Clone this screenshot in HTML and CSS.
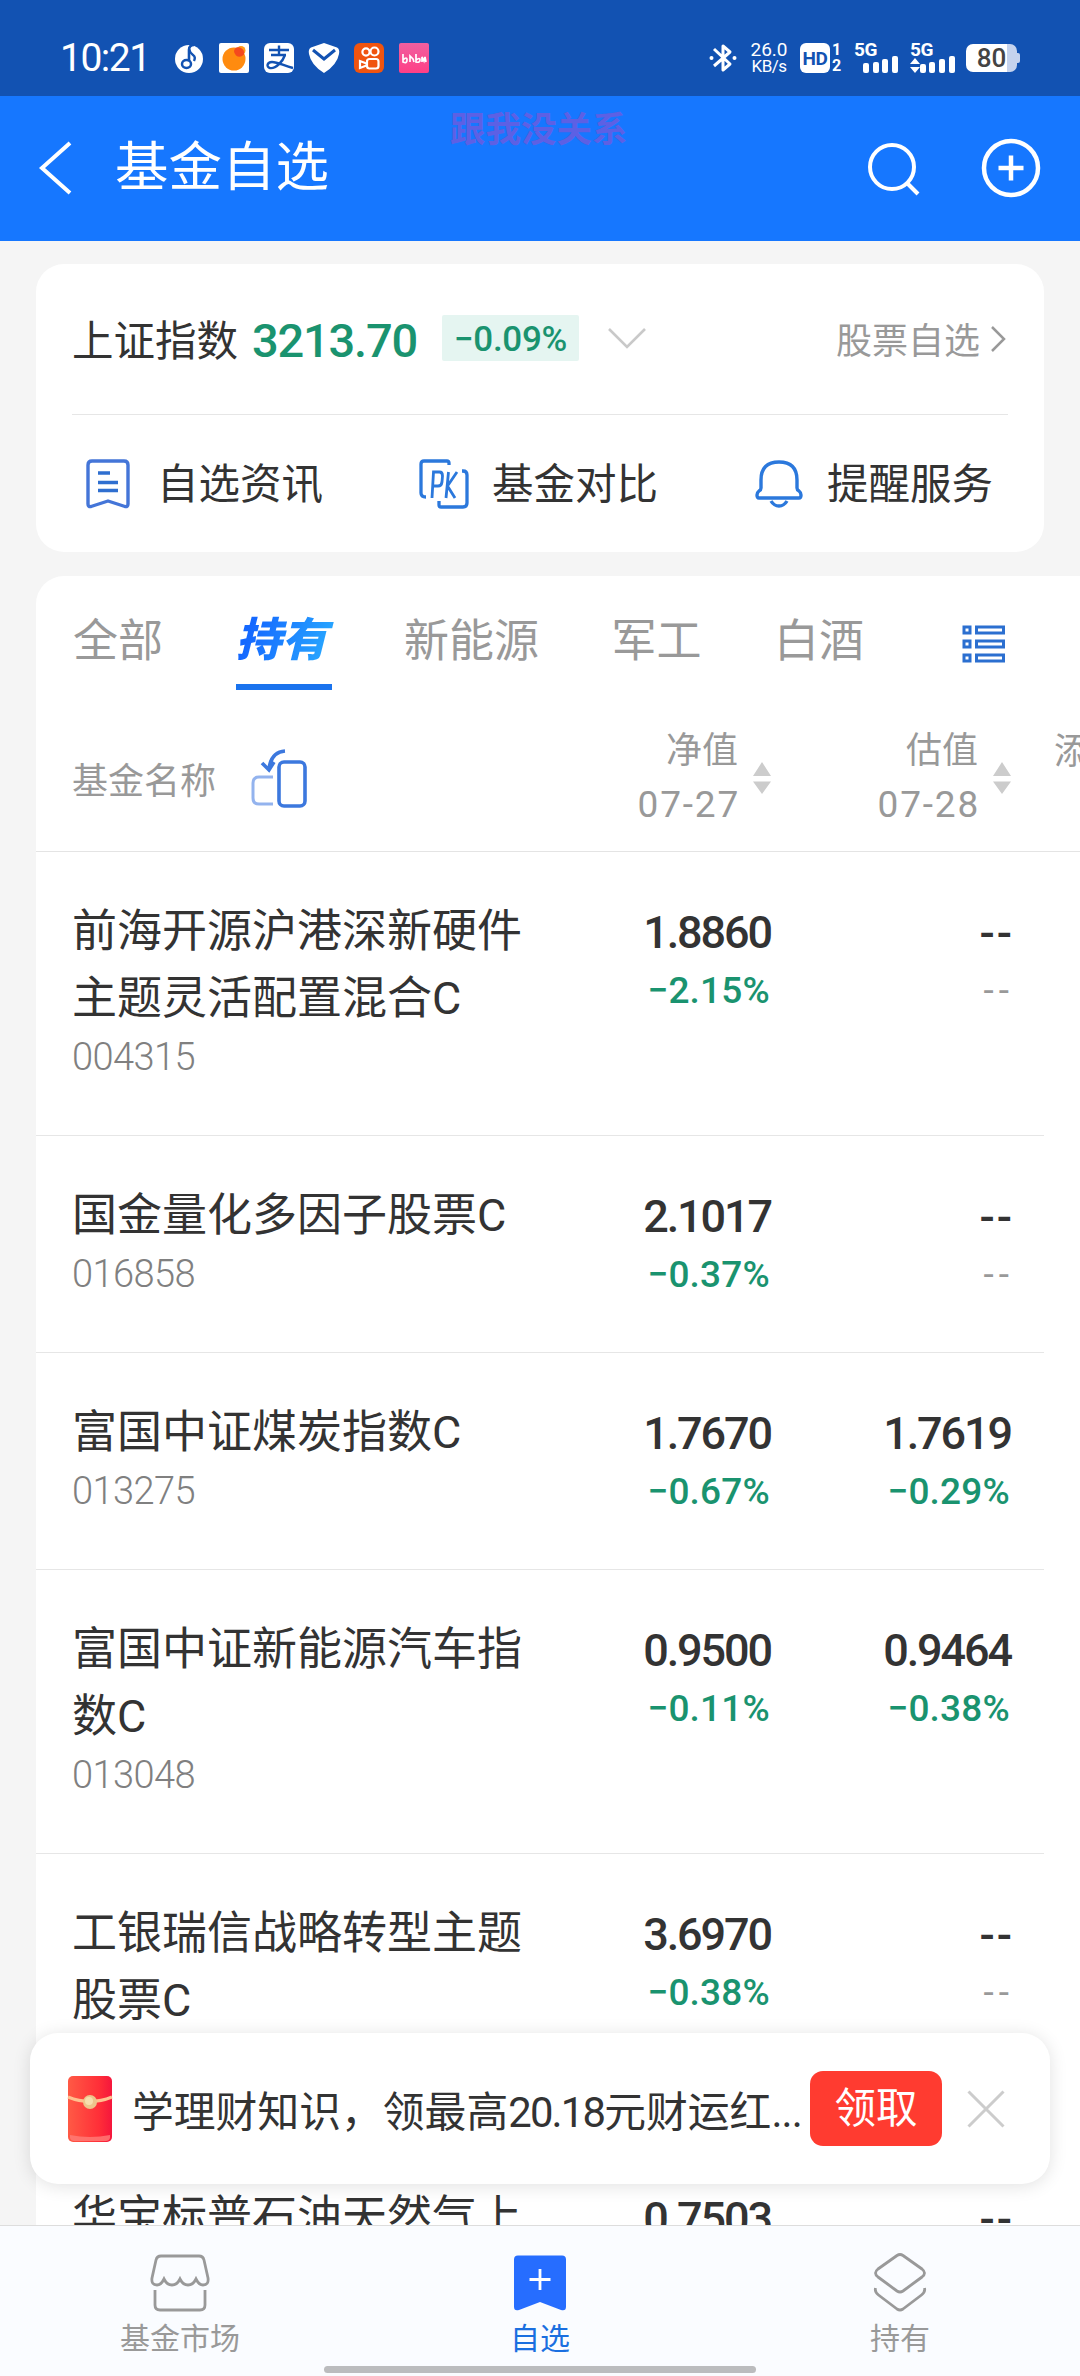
FILE: index.html
```html
<!DOCTYPE html>
<html lang="zh-CN">
<head>
<meta charset="utf-8">
<title>基金自选</title>
<link rel="stylesheet" href="styles.css">
</head>
<body>
<div class="screen">
  <div class="status">
    <span class="clock">10:21</span>
    <div class="apps">
      <svg width="30" height="30" viewBox="0 0 30 30"><circle cx="15" cy="16" r="14" fill="#fff"/><path d="M15 20V7q0-5 5-5" stroke="#1252b2" stroke-width="2.600" fill="none"/><path d="M15 6q1 4 4 6t1 6" stroke="#1252b2" stroke-width="2.400" fill="none"/><ellipse cx="12.500" cy="21" rx="4.500" ry="4" fill="#fff" stroke="#1252b2" stroke-width="2.500"/></svg>
      <svg width="30" height="30" viewBox="0 0 30 30"><rect width="30" height="30" rx="2" fill="#fff"/><circle cx="15" cy="16" r="11.500" fill="#ff8b0f"/><circle cx="22" cy="7.500" r="4.500" fill="#ff9a1a"/><path d="M15 8q1-5 6-3.500 5 2 4 7-4 4-8 1-2-2-2-4.500z" fill="#f5491d"/></svg>
      <svg width="30" height="30" viewBox="0 0 30 30"><rect width="30" height="30" rx="6" fill="#fff"/><path d="M5 7h20M15 2.500v9M7 12h15M21 12c-2 6-9 14-15 13-4-1-3-6 2-6 6 0 12 4 21 6" stroke="#1252b2" stroke-width="2.400" fill="none"/></svg>
      <svg width="30" height="30" viewBox="0 0 30 30"><path d="M15 0L28 4.500Q31 6 30 11 28 22 15 30 2 22 0 11-1 6 2 4.500z" fill="#fff"/><path d="M4 7l11 9L26 7" stroke="#1252b2" stroke-width="3" fill="none"/></svg>
      <svg width="30" height="30" viewBox="0 0 30 30"><rect width="30" height="30" rx="6" fill="#f0540f"/><g fill="none" stroke="#fff" stroke-width="2.200"><circle cx="12" cy="9" r="3.600"/><circle cx="20.500" cy="8.500" r="4"/><rect x="13" y="16" width="11.500" height="9.500" rx="2.500"/><path d="M12.500 20.500L6 18v7l6.500-2.500"/></g></svg>
      <svg width="30" height="30" viewBox="0 0 30 30"><defs><linearGradient id="pk" x2="0" y2="1"><stop stop-color="#f0609f"/><stop offset="1" stop-color="#ff3f86"/></linearGradient></defs><rect width="30" height="30" rx="2" fill="url(#pk)"/><path d="M4 11v8q4 2 4-2t-4 0M11 19v-6l3 3 1 3M17 11v8q4 1 4-2t-4 0M23 19v-5l2 4 1-4 1 5" stroke="#fff" stroke-width="1.700" fill="none"/></svg>
    </div>
    <div class="sys">
      <svg width="28" height="30" viewBox="0 0 28 30" fill="none" stroke="#fff" stroke-width="3"><path d="M5 6l16 15-7 6V3l7 6L5 23" stroke-linejoin="round"/><circle cx="2.500" cy="15" r="2" fill="#fff" stroke="none"/><circle cx="25.500" cy="15" r="2" fill="#fff" stroke="none"/></svg>
      <div class="net"><span>26.0</span><span>KB/s</span></div>
      <div class="hd"><b>HD</b><div><span>1</span><span>2</span></div></div>
      <div class="sig"><b>5G</b><svg width="46" height="30" viewBox="0 0 46 30" fill="#fff"><rect x="9" y="20" width="6" height="10" rx="2"/><rect x="19" y="19" width="6" height="11" rx="2"/><rect x="28" y="16" width="6" height="14" rx="2"/><rect x="38" y="13" width="6" height="17" rx="2"/></svg></div>
      <div class="sig"><b>5G</b><svg width="46" height="30" viewBox="0 0 46 30" fill="#fff"><path d="M0 21l5-6 5 6zM0 24h10l-5 6z"/><rect x="10" y="21" width="6" height="9" rx="2"/><rect x="19" y="19" width="6" height="11" rx="2"/><rect x="29" y="16" width="6" height="14" rx="2"/><rect x="39" y="13" width="6" height="17" rx="2"/></svg></div>
      <div class="batt">80</div>
    </div>
  </div>

  <div class="header">
    <svg class="back" width="34" height="54" viewBox="0 0 34 54" fill="none" stroke="#fff" stroke-width="4"><path d="M31 2L3 27l28 25"/></svg>
    <h1>基金自选</h1>
    <span class="mark">跟我没关系</span>
    <svg width="54" height="54" viewBox="0 0 54 54" fill="none" stroke="#fff" stroke-width="4"><circle cx="25" cy="25" r="22"/><path d="M40 41l11 11"/></svg>
    <svg class="add" width="60" height="60" viewBox="0 0 60 60" fill="none" stroke="#fff" stroke-width="4.500"><circle cx="30" cy="30" r="27"/><path d="M30 17.500v25M17.500 30h25"/></svg>
  </div>

  <div class="card">
    <div class="index">
      <span class="iname">上证指数</span>
      <span class="ival">3213.70</span>
      <span class="badge">−0.09%</span>
      <svg width="40" height="24" viewBox="0 0 40 24" fill="none" stroke="#c9c9c9" stroke-width="2.600"><path d="M2 2l18 18L38 2"/></svg>
      <span class="stock">股票自选</span>
      <svg width="16" height="28" viewBox="0 0 16 28" fill="none" stroke="#999" stroke-width="2.500"><path d="M2 2l12 12L2 26"/></svg>
    </div>
    <div class="tools">
      <div class="tool t1"><svg width="44" height="50" viewBox="0 0 44 50" fill="none" stroke="#4475d8" stroke-width="3.400" stroke-linejoin="round"><path d="M6 2h32q4 0 4 4v39q0 3-3 2.500L22 42 5 47.500Q2 48 2 45V6q0-4 4-4z"/><path d="M12 14h12M12 23.500h20M12 31.500h20" stroke="#2f6fd0"/></svg><span>自选资讯</span></div>
      <div class="tool t2"><svg width="50" height="50" viewBox="0 0 50 50" fill="none" stroke="#2b78dc" stroke-width="3.300"><path d="M30 6V4q0-2-2-2H5Q2 2 2 5v29q0 4 5 4M43 12h1q4 0 4 4v28q0 4-4 4H22q-2 0-2-2v-4"/><path d="M13 39l1.500-26h6q3 0 3 4l-.5 6q-.5 4-4 4h-5M27 39l2.500-26M38 13l-9.500 14L36 39" stroke-width="2.800"/></svg><span>基金对比</span></div>
      <div class="tool t3"><svg width="48" height="50" viewBox="0 0 48 50" fill="none" stroke="#2b78dc" stroke-width="3.400"><path d="M6 21Q6 3 24 3t18 18v8q0 2 2 3 2 1.500 2 4 0 3-2 3H4q-2 0-2-3 0-2.500 2-4 2-1 2-3z"/><path d="M16 42q3 5 8 5t8-5"/></svg><span>提醒服务</span></div>
    </div>
  </div>

  <div class="list">
    <div class="tabs">
      <span>全部</span><span class="on"><i>持有</i></span><span>新能源</span><span>军工</span><span>白酒</span>
      <svg width="44" height="38" viewBox="0 0 44 38" fill="none" stroke="#2b6fd0" stroke-width="3"><rect x="2" y="2" width="6" height="6"/><rect x="14.500" y="2" width="27" height="6"/><rect x="2" y="16" width="6" height="6"/><rect x="14.500" y="16" width="27" height="6"/><rect x="2" y="30" width="6" height="6"/><rect x="14.500" y="30" width="27" height="6"/></svg>
    </div>
    <div class="thead">
      <div class="hname"><span>基金名称</span><svg width="56" height="60" viewBox="0 0 56 60" fill="none" stroke="#3c78de" stroke-width="3.600"><rect x="28" y="13" width="26" height="44" rx="5"/><path d="M34 2Q20 3 18 20M11 14l7 7 5-8"/><path d="M22 28H8q-6 0-6 6v15q0 6 6 6h14" stroke="#93b3ee" stroke-width="3"/></svg></div>
      <div class="hcol"><div><span>净值</span><span class="date">07-27</span></div><svg width="18" height="32" viewBox="0 0 18 32" fill="#ccc"><path d="M0 14L9 0l9 14zM0 19.500h18L9 32z"/></svg></div>
      <div class="hcol"><div><span>估值</span><span class="date">07-28</span></div><svg width="18" height="32" viewBox="0 0 18 32" fill="#ccc"><path d="M0 14L9 0l9 14zM0 19.500h18L9 32z"/></svg></div>
      <div class="hmore">添加</div>
    </div>
    <div class="row"><div class="fund"><p>前海开源沪港深新硬件主题灵活配置混合C</p><small>004315</small></div><div class="val"><b>1.8860</b><em>−2.15%</em></div><div class="val none"><b>--</b><em>--</em></div></div>
    <div class="row"><div class="fund"><p>国金量化多因子股票C</p><small>016858</small></div><div class="val"><b>2.1017</b><em>−0.37%</em></div><div class="val none"><b>--</b><em>--</em></div></div>
    <div class="row"><div class="fund"><p>富国中证煤炭指数C</p><small>013275</small></div><div class="val"><b>1.7670</b><em>−0.67%</em></div><div class="val"><b>1.7619</b><em>−0.29%</em></div></div>
    <div class="row"><div class="fund"><p>富国中证新能源汽车指数C</p><small>013048</small></div><div class="val"><b>0.9500</b><em>−0.11%</em></div><div class="val"><b>0.9464</b><em>−0.38%</em></div></div>
    <div class="row"><div class="fund"><p>工银瑞信战略转型主题股票C</p></div><div class="val"><b>3.6970</b><em>−0.38%</em></div><div class="val none"><b>--</b><em>--</em></div></div>
    <div class="row last"><div class="fund"><p>华宝标普石油天然气上</p></div><div class="val"><b>0.7503</b></div><div class="val none"><b>--</b></div></div>
  </div>

  <div class="nav">
    <div class="item"><svg width="60" height="60" viewBox="0 0 60 60" fill="none" stroke="#999" stroke-width="2.800"><path d="M11 3h38q4 0 5 4l4 18q1 7-5 7-4 0-7-6-3 6-8 6t-8-6q-3 6-8 6t-8-6q-3 6-7 6-6 0-5-7L6 7q1-4 5-4zM5 37v15q0 5 5 5h40q5 0 5-5V37"/></svg>基金市场</div>
    <div class="item cur"><svg width="60" height="60" viewBox="0 0 60 60"><path d="M8 2.500h44q4 0 4 4v47q0 5-5 3.500L30 49 9 57q-5 1.500-5-3.500v-47q0-4 4-4z" fill="#266dff"/><path d="M30 16v21M19.500 26.500h21" stroke="#fff" stroke-width="2.800"/></svg>自选</div>
    <div class="item"><svg width="60" height="60" viewBox="0 0 60 60" fill="none" stroke="#999" stroke-width="2.800" stroke-linejoin="round"><path d="M27 2.500q3-2 6 0L52 16q5 4 0 8L33 38q-3 2-6 0L8 24q-5-4 0-8zM5.500 35q-1 4 3 7L27 56q3 2 6 0l18.500-14q4-3 3-7"/></svg>持有</div>
    <div class="home"></div>
  </div>

  <div class="promo">
    <svg width="44" height="66" viewBox="0 0 44 66"><defs><linearGradient id="env"><stop stop-color="#ff5a45"/><stop offset=".7" stop-color="#ff2f38"/><stop offset="1" stop-color="#f5163c"/></linearGradient></defs><rect width="44" height="66" rx="5" fill="url(#env)"/><path d="M2 59q20 4 40 0v3q-1 3-4 3H6q-3 0-4-3z" fill="#ff7d78" opacity=".8"/><path d="M0 21q22 9 44 0" fill="none" stroke="#ffc08e" stroke-width="3"/><circle cx="22" cy="26" r="7" fill="#edc58b"/><circle cx="21" cy="25" r="4" fill="#f7dfae"/></svg>
    <span class="ptext">学理财知识，领最高<span class="num">20.18</span>元财运红<span class="dots">...</span></span>
    <span class="btn">领取</span>
    <svg width="38" height="38" viewBox="0 0 38 38" stroke="#ccc" stroke-width="3"><path d="M1.500 1.500l35 35M36.500 1.500l-35 35"/></svg>
  </div>
</div>
</body>
</html>
```
FILE: styles.css
```css
* { box-sizing: border-box; margin: 0; }
body { background: #f5f5f5; font-family: Roboto, "Noto Sans CJK SC", sans-serif; color: #333; }
svg { display: block; flex: none; overflow: visible; }
.screen { position: relative; width: 1080px; height: 2376px; overflow: hidden; display: flex; flex-direction: column; }
.screen > * { flex: none; }

.status { height: 96px; padding: 20px 60px 0; background: #1252b2; color: #fff; display: flex; align-items: center; }
.clock { width: 114px; font-size: 39px; letter-spacing: -1.500px; line-height: 40px; }
.apps { display: flex; gap: 15px; }
.sys { display: flex; align-items: center; margin-left: auto; }
.net { display: flex; flex-direction: column; width: 38px; margin: 0 12px 0 13px; text-align: center; font-size: 19px; line-height: 16px; }
.net span:last-child { font-size: 17px; letter-spacing: -.5px; }
.hd { display: flex; gap: 2px; width: 42px; margin-right: 12px; }
.hd b { width: 30px; height: 30px; border-radius: 6px; background: #fff; color: #1252b2; font-size: 19px; line-height: 31px; text-align: center; letter-spacing: -.5px; }
.hd div { display: flex; flex-direction: column; gap: 2px; width: 10px; font-size: 16px; line-height: 14px; font-weight: 700; }
.sig { position: relative; width: 46px; margin-right: 10px; }
.sig b { position: absolute; left: 0; top: -1px; font-size: 19px; line-height: 16px; letter-spacing: -.5px; }
.batt { position: relative; width: 51px; height: 28px; border-radius: 7px; background: linear-gradient(90deg, #fff 80%, #c5d3ee 80%); color: #444; font-size: 26px; font-weight: 500; line-height: 29px; text-align: center; margin-right: 3px; }
.batt::after { content: ""; position: absolute; left: 51px; top: 9px; width: 3px; height: 10px; background: #c5d3ee; border-radius: 0 2px 2px 0; }

.header { position: relative; height: 145px; padding: 0 39px; background: #1677ff; color: #fff; display: flex; align-items: center; }
.back { margin-top: -2px; }
h1 { margin: -1px auto 0 42px; font-size: 53.500px; font-weight: 400; line-height: 60px; }
.mark { position: absolute; left: 450px; top: 16px; font-size: 35.500px; line-height: 36px; font-weight: 700; color: #5d60e4; }
.header svg + svg { margin-top: -2px; }
.add { margin-left: 60px; }

.card { margin: 23px 36px 0; height: 288px; padding: 0 36px; border-radius: 28px; background: #fff; }
.index { height: 151px; border-bottom: 1px solid #e6e6e6; display: flex; align-items: center; }
.iname { font-size: 41.500px; width: 180px; margin-top: -3px; }
.ival { width: 190px; font-size: 47px; font-weight: 500; letter-spacing: -1.200px; color: #1a936f; margin-top: 2px; }
.badge { width: 137px; height: 46px; margin: -3px 28px 0 0; background: #e5f5f1; color: #1a936f; font-size: 35px; font-weight: 500; line-height: 49px; text-align: center; letter-spacing: -.3px; border-radius: 2px; }
.stock { margin: -3px 10px 0 auto; font-size: 36px; color: #999; }
.index svg:last-child { margin-right: 2px; }
.tools { height: 137px; display: flex; align-items: center; }
.tool { display: flex; align-items: center; font-size: 41.500px; }
.tool span { margin-top: -5px; }
.t1 { width: 347px; padding-left: 14px; gap: 27px; }
.t2 { width: 336px; gap: 23px; }
.t3 { gap: 24px; }

.list { width: 1044px; height: 1649px; margin: 24px 0 0 36px; overflow: hidden; background: #fff; border-radius: 28px 0 0 0; }
.tabs { height: 114px; padding: 8px 74px 0 37px; display: flex; align-items: center; gap: 72.500px; font-size: 45px; color: #999; }
.tabs span { white-space: nowrap; }
.on { height: 106px; width: 96px; border-bottom: 6px solid #1a73ee; display: flex; justify-content: center; align-items: center; }
.on i { font-size: 46px; font-weight: 900; padding-right: 6px; margin: 4px -2px 0 0; background: linear-gradient(110deg, #1468ff 20%, #2bb0ff); -webkit-background-clip: text; background-clip: text; color: transparent; }
.tabs svg { margin-left: auto; margin-top: 14px; }
.thead, .row { display: grid; grid-template-columns: 460px 238px 240px; padding-left: 36px; }
.thead { grid-template-columns: 460px 239px 240px 1fr; height: 162px; padding-top: 13px; border-bottom: 1px solid #e4e4e4; align-items: center; color: #999; font-size: 36px; line-height: 54px; }
.hname { display: flex; align-items: center; gap: 35px; padding-top: 4px; }
.hname span { padding-top: 5px; }
.hcol { display: flex; align-items: center; justify-content: flex-end; gap: 15px; text-align: right; padding-top: 2px; }
.hcol span { display: block; }
.hcol .date { letter-spacing: 1.800px; margin-right: -2px; font-size: 37px; }
.hmore { padding-left: 43px; white-space: nowrap; align-self: start; padding-top: 22px; }

.row { width: 1008px; padding-top: 46px; padding-bottom: 52px; border-bottom: 1px solid #e6e6e6; }
.fund p { width: 460px; font-size: 45px; line-height: 67px; }
.fund small { display: block; font-size: 38px; line-height: 51px; font-weight: 300; color: #808080; letter-spacing: -.6px; }
.row:nth-child(7) .fund { padding-bottom: 51px; }
.val { text-align: right; }
.val b { display: block; font-size: 45px; font-weight: 500; line-height: 70px; letter-spacing: -2.100px; margin-right: -1px; }
.val em { display: block; font-style: normal; font-size: 37px; font-weight: 500; line-height: 46px; color: #1a936f; letter-spacing: .2px; }
.none b { letter-spacing: 2px; margin-right: -4px; }
.none em { color: #999; letter-spacing: 5px; margin-right: -4px; font-weight: 400; }

.nav { position: relative; height: 151px; border-top: 1px solid #ddd; background: #fafcff; display: grid; grid-template-columns: repeat(3, 360px); }
.item { display: flex; flex-direction: column; align-items: center; padding-top: 27px; font-size: 30px; line-height: 52px; color: #999; }
.cur { color: #1a6fe0; }
.home { position: absolute; left: 324px; top: 140px; width: 432px; height: 7px; border-radius: 4px; background: #bbbcbe; }

.promo { position: absolute; left: 30px; top: 2033px; width: 1020px; height: 151px; padding: 0 45px 0 38px; border-radius: 28px; background: #fff; box-shadow: 0 2px 18px rgba(0, 0, 0, .12); display: flex; align-items: center; }
.ptext { margin-left: 20px; width: 678px; white-space: nowrap; font-size: 41.800px; }
.num { letter-spacing: -1.800px; }
.dots { letter-spacing: -.8px; }
.btn { width: 132px; height: 75px; border-radius: 13px; background: #ff3b30; color: #fff; font-size: 41.500px; line-height: 76px; text-align: center; margin-right: auto; }
```
